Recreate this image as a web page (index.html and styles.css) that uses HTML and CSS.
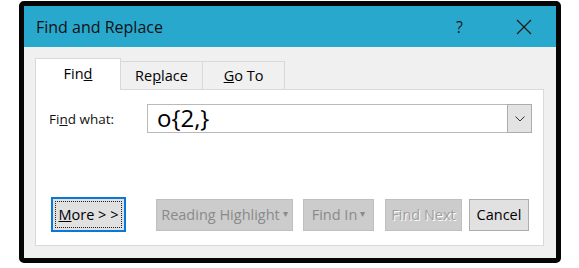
FILE: index.html
```html
<!DOCTYPE html>
<html lang="en">
<head>
    <meta charset="UTF-8">
    <title>Find and Replace</title>
    <link rel="stylesheet" href="styles.css">
</head>
<body>
    <div class="dialog">
        <div class="title-bar">
            <span class="title">Find and Replace</span>
            <span class="help">?</span>
            <span class="close">
                <svg width="16" height="16" viewBox="0 0 16 16">
                    <path d="M1 1 L15 15 M15 1 L1 15" stroke="#1a1a1a" stroke-width="1.2" fill="none"/>
                </svg>
            </span>
        </div>
        <div class="dialog-body">
            <div class="tabs">
                <div class="tab active">Fin<u>d</u></div>
                <div class="tab">Re<u>p</u>lace</div>
                <div class="tab"><u>G</u>o To</div>
            </div>
            <div class="panel">
                <div class="find-row">
                    <label class="find-label">Fi<u>n</u>d what:</label>
                    <div class="combo">
                        <span class="combo-text">o{2,}</span>
                        <span class="combo-btn">
                            <svg width="10" height="6" viewBox="0 0 10 6">
                                <path d="M0.5 0.5 L5 5 L9.5 0.5" stroke="#333" stroke-width="1" fill="none"/>
                            </svg>
                        </span>
                    </div>
                </div>
                <div class="button-row">
                    <button class="btn more"><span class="focus-ring"><u>M</u>ore &gt; &gt;</span></button>
                    <button class="btn disabled reading">Reading Highlight<span class="caret">&#9662;</span></button>
                    <button class="btn disabled find-in">Find In<span class="caret">&#9662;</span></button>
                    <button class="btn disabled embossed find-next">Find Next</button>
                    <button class="btn cancel">Cancel</button>
                </div>
            </div>
        </div>
    </div>
</body>
</html>
```

FILE: styles.css
```css
* {
    margin: 0;
    padding: 0;
    box-sizing: border-box;
}
body {
    background: #fff;
    font-family: 'Open Sans', 'Noto Sans', sans-serif;
    color: #000;
}
.dialog {
    margin: 1px 0 0 19px;
    width: 542px;
    height: 262px;
    border: 5px solid #050505;
    border-radius: 5px;
    background: #f0f0f0;
    display: flex;
    flex-direction: column;
    overflow: hidden;
}
.title-bar {
    height: 41px;
    background: #29a8cd;
    display: flex;
    align-items: center;
    padding-left: 12px;
    flex-shrink: 0;
}
.title {
    font-size: 16px;
    color: #111;
    flex: 1;
}
.help {
    font-size: 16px;
    color: #1a1a1a;
    margin-right: 53px;
}
.close {
    display: flex;
    margin-right: 24px;
}
.dialog-body {
    flex: 1;
    padding: 11px 12px 12px 11px;
    display: flex;
    flex-direction: column;
}
.tabs {
    display: flex;
    align-items: flex-end;
    height: 31px;
    position: relative;
    z-index: 1;
}
.tab {
    height: 28px;
    background: #f0f0f0;
    border: 1px solid #d9d9d9;
    border-bottom: none;
    margin-left: -1px;
    font-size: 14.5px;
    display: flex;
    align-items: center;
    justify-content: center;
    width: 83px;
}
.tab:first-child {
    margin-left: 0;
}
.tab.active {
    height: 32px;
    margin-bottom: -1px;
    background: #fff;
    width: 86px;
    padding-bottom: 2px;
}
.panel {
    flex: 1;
    background: #fff;
    border: 1px solid #d9d9d9;
    padding: 14px 11px 13px 13px;
    display: flex;
    flex-direction: column;
    justify-content: space-between;
}
.find-row {
    display: flex;
    align-items: center;
    height: 29px;
}
.find-label {
    font-size: 13.5px;
    width: 98px;
    color: #111;
}
.combo {
    flex: 1;
    height: 29px;
    border: 1px solid #b9b9b9;
    display: flex;
    align-items: stretch;
}
.combo-text {
    flex: 1;
    font-size: 24px;
    line-height: 26px;
    padding-left: 9px;
    color: #000;
}
.combo-btn {
    width: 25px;
    margin: -1px -1px -1px 0;
    background: #e3e3e3;
    border: 1px solid #acacac;
    display: flex;
    align-items: center;
    justify-content: center;
}
.button-row {
    display: flex;
    align-items: center;
    height: 35px;
}
.btn {
    font-family: inherit;
    font-size: 14.5px;
    height: 32px;
    border: 1px solid #adadad;
    background: #e1e1e1;
    color: #000;
    display: flex;
    align-items: center;
    justify-content: center;
}
.btn.more {
    width: 75px;
    height: 35px;
    margin-left: 2px;
    border: 2px solid #0a78d7;
    padding: 2px;
}
.focus-ring {
    flex: 1;
    align-self: stretch;
    border: 1px dotted #222;
    display: flex;
    align-items: center;
    justify-content: center;
}
.btn.disabled {
    background: #cccccc;
    border-color: #bfbfbf;
    color: #8a8a8a;
}
.caret {
    font-size: 10px;
    margin-left: 3px;
    margin-top: -4px;
    color: #8a8a8a;
}
.btn.embossed {
    color: #a0a0a0;
    text-shadow: 1px 1px 0 #fff;
}
.reading {
    width: 137px;
    margin-left: 30px;
}
.find-in {
    width: 71px;
    margin-left: 10px;
}
.find-next {
    width: 77px;
    margin-left: 11px;
}
.cancel {
    width: 60px;
    margin-left: 7px;
}
```
